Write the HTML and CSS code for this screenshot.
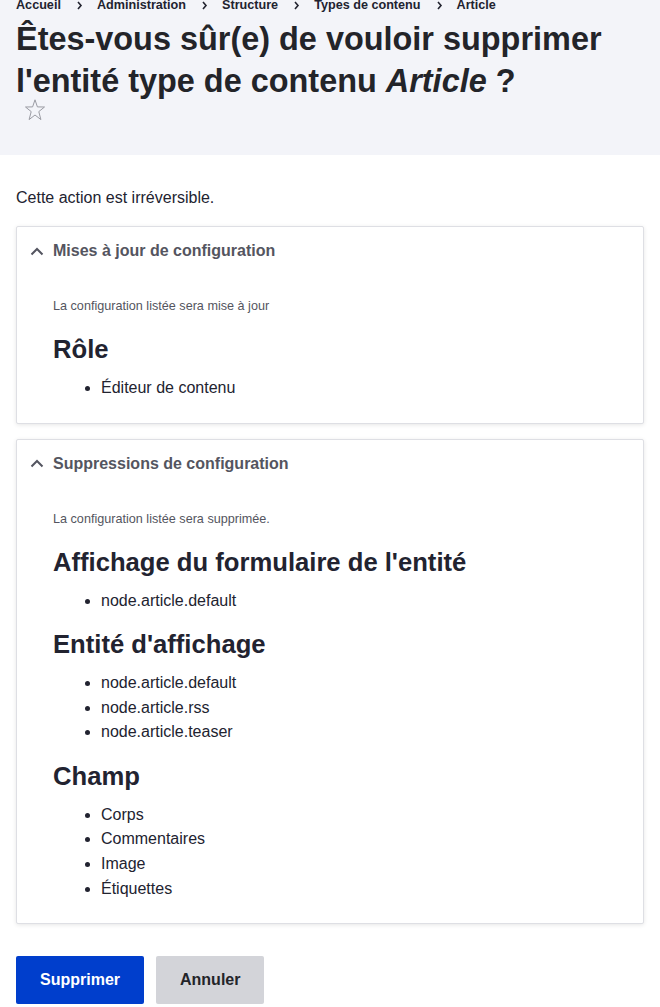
FILE: index.html
```html
<!DOCTYPE html>
<html lang="fr">
<head>
<meta charset="utf-8">
<title>Supprimer Article</title>
<link rel="stylesheet" href="styles.css">
</head>
<body>
<header class="page-header">
  <nav class="breadcrumb">
    <a href="#">Accueil</a>
    <svg class="crumb-sep" width="7" height="9" viewBox="0 0 7 9"><polyline points="2,1 5,4.5 2,8" fill="none" stroke="#222330" stroke-width="1.6"/></svg>
    <a href="#">Administration</a>
    <svg class="crumb-sep" width="7" height="9" viewBox="0 0 7 9"><polyline points="2,1 5,4.5 2,8" fill="none" stroke="#222330" stroke-width="1.6"/></svg>
    <a href="#">Structure</a>
    <svg class="crumb-sep" width="7" height="9" viewBox="0 0 7 9"><polyline points="2,1 5,4.5 2,8" fill="none" stroke="#222330" stroke-width="1.6"/></svg>
    <a href="#">Types de contenu</a>
    <svg class="crumb-sep" width="7" height="9" viewBox="0 0 7 9"><polyline points="2,1 5,4.5 2,8" fill="none" stroke="#222330" stroke-width="1.6"/></svg>
    <a href="#">Article</a>
  </nav>
  <h1 class="page-title">Êtes-vous sûr(e) de vouloir supprimer l'entité type de contenu <em>Article</em>&nbsp;?</h1>
  <div class="shortcut">
    <svg width="22" height="22" viewBox="0 0 22 22"><path d="M11 0.8 L13.4 7.9 L20.5 8 L14.8 12.6 L16.9 20.6 L11 16 L5.1 20.6 L7.2 12.6 L1.5 8 L8.6 7.9 Z" fill="none" stroke="#9a9ba3" stroke-width="1" stroke-linejoin="miter"/></svg>
  </div>
</header>

<main class="content">
  <p class="intro">Cette action est irréversible.</p>

  <details class="panel" open>
    <summary class="panel-summary">
      <svg class="chev" width="14" height="9" viewBox="0 0 14 9"><polyline points="1.5,7.5 7,2 12.5,7.5" fill="none" stroke="#545560" stroke-width="2"/></svg>
      Mises à jour de configuration
    </summary>
    <div class="panel-body">
      <p class="desc">La configuration listée sera mise à jour</p>
      <h3 class="group-title">Rôle</h3>
      <ul class="items">
        <li>Éditeur de contenu</li>
      </ul>
    </div>
  </details>

  <details class="panel" open>
    <summary class="panel-summary">
      <svg class="chev" width="14" height="9" viewBox="0 0 14 9"><polyline points="1.5,7.5 7,2 12.5,7.5" fill="none" stroke="#545560" stroke-width="2"/></svg>
      Suppressions de configuration
    </summary>
    <div class="panel-body">
      <p class="desc">La configuration listée sera supprimée.</p>
      <h3 class="group-title">Affichage du formulaire de l'entité</h3>
      <ul class="items">
        <li>node.article.default</li>
      </ul>
      <h3 class="group-title">Entité d'affichage</h3>
      <ul class="items">
        <li>node.article.default</li>
        <li>node.article.rss</li>
        <li>node.article.teaser</li>
      </ul>
      <h3 class="group-title">Champ</h3>
      <ul class="items">
        <li>Corps</li>
        <li>Commentaires</li>
        <li>Image</li>
        <li>Étiquettes</li>
      </ul>
    </div>
  </details>

  <div class="actions">
    <button class="btn btn-primary" type="button">Supprimer</button>
    <button class="btn btn-secondary" type="button">Annuler</button>
  </div>
</main>
</body>
</html>
```

FILE: styles.css
```css
html, body {
  margin: 0;
  padding: 0;
}
body {
  font-family: "Liberation Sans", Arial, sans-serif;
  color: #222330;
  background: #ffffff;
  font-size: 16px;
  line-height: 1.5;
}

.page-header {
  background: #f3f4f9;
  padding: 0 16px 34px;
}

.breadcrumb {
  display: flex;
  align-items: center;
  margin-top: -5px;
  height: 20px;
  font-size: 12.64px;
  line-height: 20px;
  font-weight: bold;
}
.breadcrumb a {
  color: #222330;
  text-decoration: none;
}
.crumb-sep {
  margin: 0 14px 0 15px;
  flex: none;
}

.page-title {
  margin: 3px 0 0;
  font-size: 32.43px;
  line-height: 42.16px;
  font-weight: bold;
  color: #232429;
}
.page-title em {
  font-style: italic;
}

.shortcut {
  height: 22px;
  padding-left: 8px;
  margin-top: -3px;
}
.shortcut svg {
  display: block;
}

.content {
  padding: 0 16px;
}

.intro {
  margin: 31px 0 16px;
  line-height: 24px;
}

.panel {
  border: 1px solid #dedfe4;
  border-radius: 2px;
  box-shadow: 0 1px 4px rgba(0, 0, 0, 0.1);
  margin-bottom: 15px;
  background: #fff;
}

.panel-summary {
  list-style: none;
  display: flex;
  align-items: center;
  padding: 16px 16px 15px 13px;
  font-weight: bold;
  line-height: 16px;
  color: #545560;
  cursor: pointer;
}
.panel-summary::-webkit-details-marker {
  display: none;
}
.chev {
  margin-right: 9px;
  flex: none;
}

.panel-body {
  padding: 23px 24px 22px 36px;
}

.desc {
  margin: 0 0 19px;
  font-size: 12.64px;
  line-height: 18px;
  color: #545560;
}

.group-title {
  margin: 16px 0 11px;
  font-size: 25.63px;
  line-height: 30.76px;
  font-weight: bold;
  color: #222330;
}

.items {
  margin: 0;
  padding-left: 48px;
}
.items li {
  line-height: 24.67px;
}

.actions {
  display: flex;
  gap: 12px;
  margin-top: 32px;
}

.btn {
  font-family: "Liberation Sans", Arial, sans-serif;
  font-size: 16px;
  font-weight: bold;
  line-height: 24px;
  padding: 12px 24px;
  border: 0;
  border-radius: 2px;
}
.btn-primary {
  background: #003ecc;
  color: #fff;
}
.btn-secondary {
  background: #d3d4d9;
  color: #232429;
}
```
